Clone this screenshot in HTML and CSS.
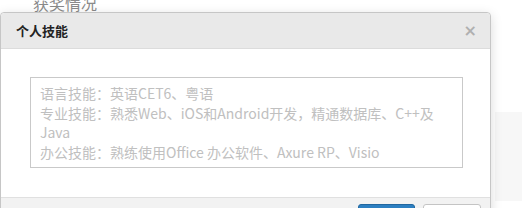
FILE: index.html
```html
<!DOCTYPE html>
<html lang="zh-CN">
<head>
    <meta charset="UTF-8">
    <meta name="viewport" content="width=device-width, initial-scale=1.0">
    <title>个人技能</title>
    <link rel="stylesheet" href="styles.css">
</head>
<body>
    <div class="page">
        <h3 class="section-title">获奖情况</h3>
        <div class="side-panel"></div>
    </div>

    <div class="modal">
        <div class="modal-header">
            <span class="modal-title">个人技能</span>
            <span class="modal-close">&times;</span>
        </div>
        <div class="modal-body">
            <div class="skill-box">语言技能：英语CET6、粤语<br>专业技能：熟悉Web、iOS和Android开发，精通数据库、C++及 Java<br>办公技能：熟练使用Office 办公软件、Axure RP、Visio</div>
        </div>
        <div class="modal-footer">
            <button class="btn btn-primary">保存</button>
            <button class="btn btn-default">取消</button>
        </div>
    </div>
</body>
</html>
```

FILE: styles.css
```css
body {
    margin: 0;
    background: #fff;
    font-family: "Noto Sans CJK SC", "Noto Sans", sans-serif;
    overflow: hidden;
}

.page {
    position: relative;
    height: 208px;
}

.section-title {
    margin: -7px 0 0 33px;
    font-size: 16px;
    font-weight: normal;
    line-height: 20px;
    color: #8a8a8a;
}

.side-panel {
    margin: 99px 0 0 495px;
    height: 100px;
    background: #f7f7f7;
}

.modal {
    position: absolute;
    top: 12px;
    left: 0;
    width: 489px;
    border: 1px solid #c6c6c6;
    border-radius: 4px;
    background: #fff;
    box-shadow: 0 3px 12px rgba(0,0,0,0.15);
}

.modal-header {
    display: flex;
    align-items: center;
    justify-content: space-between;
    height: 35px;
    padding: 0 13px 0 15px;
    background: #e9e9e9;
    border-bottom: 1px solid #dcdcdc;
    border-radius: 4px 4px 0 0;
}

.modal-title {
    font-size: 13px;
    font-weight: bold;
    color: #222;
}

.modal-close {
    font-family: "DejaVu Sans", sans-serif;
    font-size: 16px;
    font-weight: bold;
    color: #b0b0b0;
    line-height: 16px;
}

.modal-body {
    padding: 28px 29px 29px;
}

.skill-box {
    width: 413px;
    height: 79px;
    padding: 6px 9px 4px;
    border: 1px solid #c9c9c9;
    font-size: 14px;
    line-height: 19.5px;
    color: #c0c0c0;
}

.modal-footer {
    display: flex;
    justify-content: flex-end;
    gap: 8px;
    padding: 6px 9px 6px;
    background: #f2f2f2;
    border-top: 1px solid #e0e0e0;
}

.btn {
    height: 30px;
    padding: 0;
    border-radius: 3px;
    font-family: inherit;
    font-size: 13px;
}

.btn-primary {
    width: 57px;
    background: #2d7fc1;
    border: 1px solid #21679f;
    color: #fff;
}

.btn-default {
    width: 58px;
    background: #fff;
    border: 1px solid #c4c4c4;
    color: #333;
}
```
